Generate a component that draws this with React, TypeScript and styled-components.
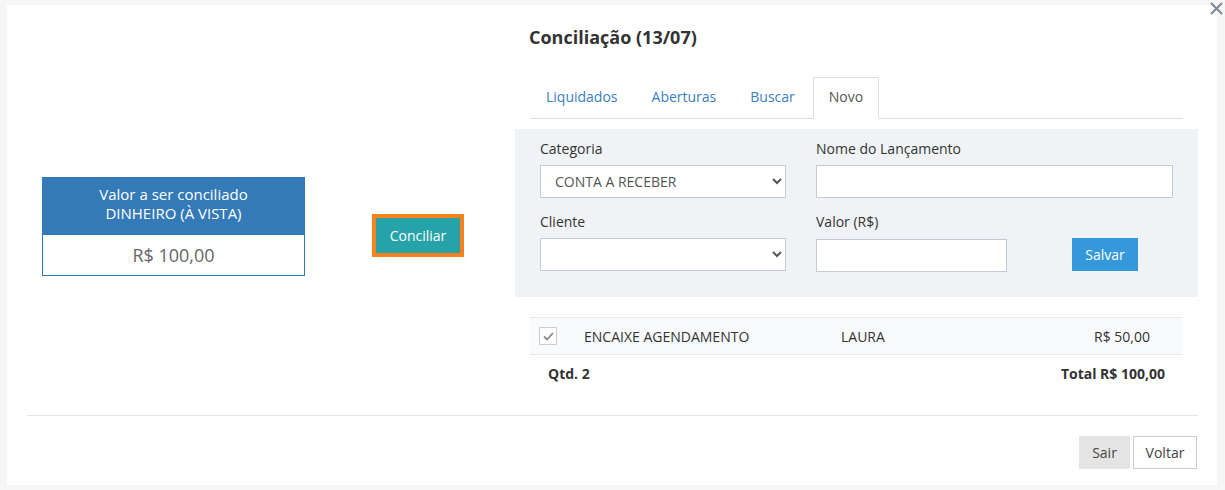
import React from 'react';
import styled, { createGlobalStyle } from 'styled-components';

const GlobalStyle = createGlobalStyle`
  html, body {
    margin: 0;
    padding: 0;
    background: #f6f6f6;
  }
  body {
    font-family: 'Open Sans', 'Liberation Sans', sans-serif;
    font-size: 14px;
    color: #333;
  }
  * {
    box-sizing: border-box;
  }
`;

const Modal = styled.div`
  position: relative;
  width: 1210px;
  height: 480px;
  margin: 5px 0 0 7px;
  background: #fff;
`;

const CloseButton = styled.button`
  position: absolute;
  top: -3px;
  right: -6px;
  width: 13px;
  height: 13px;
  padding: 0;
  border: none;
  background: transparent;
  display: flex;
  align-items: center;
  justify-content: center;
`;

const Top = styled.div`
  display: flex;
  height: 410px;
`;

const LeftSide = styled.div`
  width: 508px;
  display: flex;
  align-items: flex-start;
  padding: 172px 0 0 35px;
`;

const ValueBox = styled.div`
  width: 263px;
  border: 1px solid #337ab7;
`;

const ValueHead = styled.div`
  background: #337ab7;
  color: #fff;
  text-align: center;
  font-size: 15px;
  line-height: 19px;
  padding: 7px 8px 0;
  height: 57px;
`;

const ValueAmount = styled.div`
  text-align: center;
  font-size: 18px;
  color: #666;
  height: 40px;
  line-height: 40px;
`;

const ConciliarOutline = styled.div`
  margin: 37px 0 0 67px;
  border: 4px solid #f5821f;
`;

const ConciliarButton = styled.button`
  display: block;
  width: 84px;
  height: 35px;
  border: none;
  background: #26a2a9;
  color: #fff;
  font-family: inherit;
  font-size: 14px;
  padding: 0;
`;

const RightSide = styled.div`
  width: 683px;
  padding-top: 20px;
`;

const Title = styled.h4`
  margin: 0 0 0 14px;
  font-size: 18px;
  line-height: 24px;
  font-weight: 700;
  color: #333;
`;

const Tabs = styled.div`
  display: flex;
  margin: 28px 15px 0;
  border-bottom: 1px solid #ddd;
  height: 42px;
`;

const Tab = styled.div<{ $active?: boolean }>`
  height: 42px;
  margin-bottom: -1px;
  padding: 0 15px;
  line-height: 38px;
  font-size: 14px;
  color: ${p => (p.$active ? '#555' : '#3a7fc4')};
  background: ${p => (p.$active ? '#fff' : 'transparent')};
  border: 1px solid ${p => (p.$active ? '#ddd' : 'transparent')};
  border-bottom-color: ${p => (p.$active ? '#fff' : 'transparent')};
  margin-right: 2px;
`;

const FormPanel = styled.div`
  margin-top: 10px;
  background: #eff3f6;
  padding: 10px 25px 25px;
  display: grid;
  grid-template-columns: 246px 357px;
  column-gap: 30px;
  row-gap: 14px;
  height: 168px;
`;

const Field = styled.div`
  display: flex;
  flex-direction: column;
`;

const Label = styled.label`
  font-size: 14px;
  line-height: 20px;
  margin-bottom: 6px;
  color: #333;
`;

const Select = styled.select`
  width: 246px;
  height: 33px;
  border: 1px solid #c4cbd6;
  background: #fff;
  font-family: inherit;
  font-size: 14px;
  color: #555;
  padding: 0 10px;
  border-radius: 0;
  outline: none;
`;

const Input = styled.input<{ $w: number }>`
  width: ${p => p.$w}px;
  height: 33px;
  border: 1px solid #c4cbd6;
  background: #fff;
  border-radius: 0;
  padding: 0 10px;
  outline: none;
`;

const InlineRow = styled.div`
  display: flex;
  align-items: flex-end;
`;

const SaveButton = styled.button`
  margin-left: 65px;
  margin-bottom: 1px;
  width: 66px;
  height: 33px;
  border: none;
  background: #3498db;
  color: #fff;
  font-family: inherit;
  font-size: 14px;
  padding: 0;
`;

const Table = styled.div`
  margin: 20px 15px 0;
`;

const Row = styled.div`
  display: flex;
  align-items: center;
  height: 38px;
  background: #f9fafc;
  border-top: 1px solid #e5e8ec;
  border-bottom: 1px solid #e5e8ec;
  font-size: 14px;
  color: #333;
`;

const CheckBox = styled.span`
  width: 18px;
  height: 18px;
  margin-left: 9px;
  border: 1px solid #ccc;
  background: #fff;
  display: flex;
  align-items: center;
  justify-content: center;
`;

const Cell = styled.span<{ $w?: number; $right?: boolean }>`
  width: ${p => (p.$w ? `${p.$w}px` : 'auto')};
  flex: ${p => (p.$w ? 'none' : '1')};
  text-align: ${p => (p.$right ? 'right' : 'left')};
`;

const Summary = styled.div`
  display: flex;
  justify-content: space-between;
  padding: 0 18px;
  height: 40px;
  line-height: 38px;
  font-weight: 700;
  font-size: 14px;
  color: #333;
`;

const Divider = styled.hr`
  margin: 0 19px 0 20px;
  border: none;
  border-top: 1px solid #e5e5e5;
`;

const Footer = styled.div`
  display: flex;
  justify-content: flex-end;
  gap: 3px;
  padding: 20px 20px 0;
`;

const FooterButton = styled.button<{ $outline?: boolean; $w: number }>`
  width: ${p => p.$w}px;
  height: 33px;
  padding: 0;
  font-family: inherit;
  font-size: 14px;
  color: #444;
  background: ${p => (p.$outline ? '#fff' : '#e4e4e4')};
  border: 1px solid ${p => (p.$outline ? '#ccc' : '#e4e4e4')};
  border-radius: 0;
`;

export default function App() {
  return (
    <>
      <GlobalStyle />
      <Modal>
        <CloseButton aria-label="Fechar">
          <svg width="13" height="13" viewBox="0 0 13 13">
            <path d="M1 1 L12 12 M12 1 L1 12" stroke="#7b8794" strokeWidth="2" />
          </svg>
        </CloseButton>
        <Top>
          <LeftSide>
            <ValueBox>
              <ValueHead>
                Valor a ser conciliado
                <br />
                DINHEIRO (À VISTA)
              </ValueHead>
              <ValueAmount>R$ 100,00</ValueAmount>
            </ValueBox>
            <ConciliarOutline>
              <ConciliarButton>Conciliar</ConciliarButton>
            </ConciliarOutline>
          </LeftSide>
          <RightSide>
            <Title>Conciliação (13/07)</Title>
            <Tabs>
              <Tab>Liquidados</Tab>
              <Tab>Aberturas</Tab>
              <Tab>Buscar</Tab>
              <Tab $active>Novo</Tab>
            </Tabs>
            <FormPanel>
              <Field>
                <Label>Categoria</Label>
                <Select defaultValue="receber">
                  <option value="receber">CONTA A RECEBER</option>
                </Select>
              </Field>
              <Field>
                <Label>Nome do Lançamento</Label>
                <Input $w={357} />
              </Field>
              <Field>
                <Label>Cliente</Label>
                <Select defaultValue="">
                  <option value=""></option>
                </Select>
              </Field>
              <Field>
                <Label>Valor (R$)</Label>
                <InlineRow>
                  <Input $w={191} />
                  <SaveButton>Salvar</SaveButton>
                </InlineRow>
              </Field>
            </FormPanel>
            <Table>
              <Row>
                <CheckBox>
                  <svg width="11" height="9" viewBox="0 0 11 9">
                    <path d="M1 4.5 L4 7.5 L10 1" stroke="#888" strokeWidth="1.8" fill="none" />
                  </svg>
                </CheckBox>
                <Cell $w={27} />
                <Cell $w={257}>ENCAIXE AGENDAMENTO</Cell>
                <Cell>LAURA</Cell>
                <Cell $w={120} $right>R$ 50,00</Cell>
                <Cell $w={33} />
              </Row>
              <Summary>
                <span>Qtd. 2</span>
                <span>Total R$ 100,00</span>
              </Summary>
            </Table>
          </RightSide>
        </Top>
        <Divider />
        <Footer>
          <FooterButton $w={51}>Sair</FooterButton>
          <FooterButton $w={64} $outline>Voltar</FooterButton>
        </Footer>
      </Modal>
    </>
  );
}
